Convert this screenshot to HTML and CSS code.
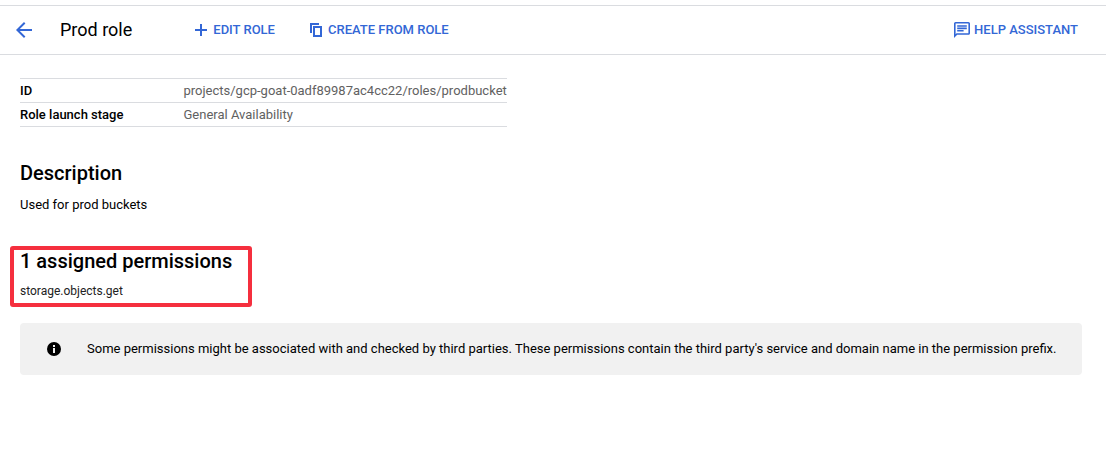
FILE: index.html
```html
<!DOCTYPE html>
<html lang="en">
<head>
<meta charset="utf-8">
<title>Prod role</title>
<link rel="stylesheet" href="styles.css">
</head>
<body>
<header class="toolbar">
  <button class="back" type="button" aria-label="Back"><svg class="icon-back" viewBox="0 0 24 24"><path d="M20 11H7.83l5.59-5.59L12 4l-8 8 8 8 1.41-1.41L7.83 13H20z"/></svg></button>
  <h1 class="title">Prod role</h1>
  <button class="action edit" type="button"><svg class="icon" viewBox="0 0 16 16"><path d="M14 9H9v5H7V9H2V7h5V2h2v5h5z"/></svg>EDIT ROLE</button>
  <button class="action" type="button"><svg class="icon" viewBox="0 0 16 16"><path fill-rule="evenodd" d="M2 1h9v2H4v8H2zM5 4h9v11H5zM7 6v7h5V6z"/></svg>CREATE FROM ROLE</button>
  <button class="action help" type="button"><svg class="icon" viewBox="2 2 20 20"><path d="M4 4h16v12H5.17L4 17.17V4m0-2c-1.1 0-2 .9-2 2v18l4-4h14c1.1 0 2-.9 2-2V4c0-1.1-.9-2-2-2H4zm2 10h8v2H6v-2zm0-3h12v2H6V9zm0-3h12v2H6V6z"/></svg>HELP ASSISTANT</button>
</header>
<main class="content">
  <table class="details">
    <tr><th scope="row">ID</th><td>projects/gcp-goat-0adf89987ac4cc22/roles/prodbucket</td></tr>
    <tr><th scope="row">Role launch stage</th><td>General Availability</td></tr>
  </table>
  <section class="description">
    <h2 class="heading">Description</h2>
    <p class="text">Used for prod buckets</p>
  </section>
  <section class="permissions">
    <h2 class="heading">1 assigned permissions</h2>
    <p class="permission">storage.objects.get</p>
  </section>
  <aside class="notice">
    <svg class="icon-info" viewBox="0 0 16 16"><circle cx="8" cy="8" r="7"/><path fill="#f1f1f1" d="M7 4h2v2H7zM7 7h2v5H7z"/></svg>
    <p class="text">Some permissions might be associated with and checked by third parties. These permissions contain the third party's service and domain name in the permission prefix.</p>
  </aside>
</main>
</body>
</html>
```
FILE: styles.css
```css
* {
  box-sizing: border-box;
}

body {
  margin: 0;
  padding-top: 5px;
  background: #fff;
  color: #000;
  font-family: Roboto, "Liberation Sans", sans-serif;
  font-size: 13px;
  line-height: 20px;
}

h1, h2, p {
  margin: 0;
}

button {
  padding: 0;
  border: 0;
  background: none;
  color: #3367d6;
  font: inherit;
  cursor: pointer;
}

svg {
  display: block;
  flex: none;
  fill: currentColor;
}

.toolbar {
  display: flex;
  align-items: center;
  height: 50px;
  padding: 0 28px 0 12px;
  border-top: 1px solid #dadce0;
  border-bottom: 1px solid #dadce0;
}

.icon-back {
  width: 24px;
  height: 24px;
}

.title {
  margin-left: 24px;
  font-size: 18px;
  font-weight: 400;
}

.action {
  display: flex;
  align-items: center;
  gap: 4px;
  margin-left: 33px;
  font-weight: 500;
}

.edit {
  margin-left: 61px;
}

.help {
  margin-left: auto;
}

.icon {
  width: 16px;
  height: 16px;
}

.content {
  padding: 23px 24px 24px 20px;
}

.details {
  border-collapse: collapse;
}

.details th,
.details td {
  height: 24px;
  padding: 0;
  border-top: 1px solid #dadce0;
  border-bottom: 1px solid #dadce0;
  line-height: 20px;
  text-align: left;
}

.details th {
  padding-right: 60px;
  font-weight: 500;
}

.details td {
  color: #616161;
}

.description {
  margin-top: 35px;
}

.heading {
  font-size: 20px;
  font-weight: 500;
  line-height: 22px;
}

.description .text {
  margin-top: 11px;
}

.permissions {
  width: 242px;
  margin: 31px 0 0 -10px;
  padding: 0 6px 2px;
  border: 4px solid #f52f3e;
  border-radius: 3px;
}

.permission {
  margin-top: 9px;
  color: #212121;
  font-size: 12px;
}

.notice {
  display: flex;
  align-items: center;
  gap: 25px;
  margin-top: 16px;
  padding: 16px 16px 16px 26px;
  border-radius: 4px;
  background: #f1f1f1;
}

.icon-info {
  width: 16px;
  height: 16px;
}
```
